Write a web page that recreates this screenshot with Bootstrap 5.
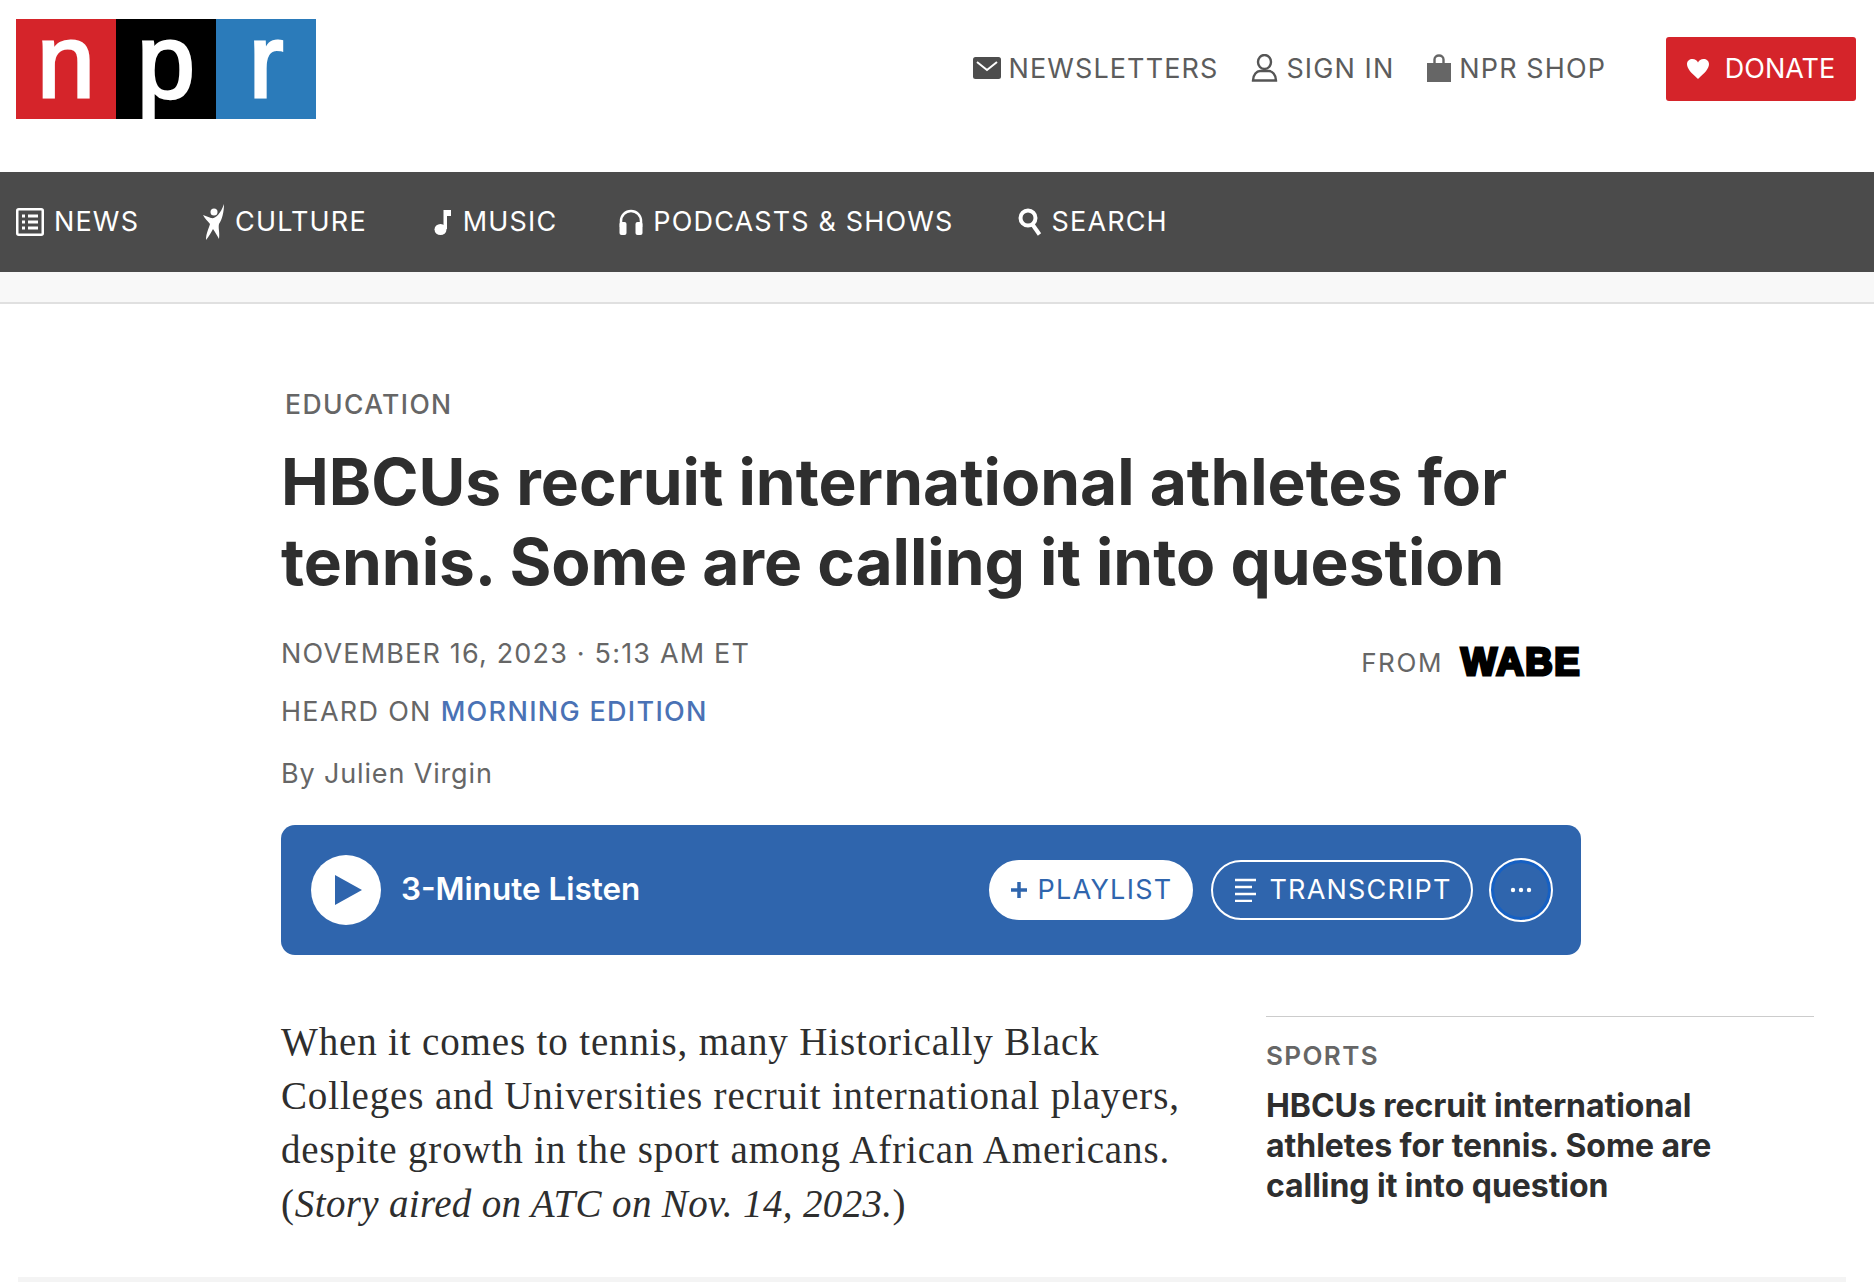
<!DOCTYPE html>
<html lang="en">
<head>
  <meta charset="UTF-8" />
  <title>NPR</title>
  <link href="https://cdn.jsdelivr.net/npm/bootstrap@5.3.0/dist/css/bootstrap.min.css" rel="stylesheet">
  <style>
    body { background: #fff; font-family: "Inter", "Liberation Sans", sans-serif; color: #2e2e2e; }
    a { text-decoration: none; }
    .top-bar { height: 172px; padding: 19px 18px 0 16px; }
    .logo-box { width: 100px; height: 100px; color: #fff; font-family: "Liberation Sans", sans-serif; font-weight: 400; font-size: 104px; line-height: 84px; -webkit-text-stroke: 3px #fff; }
    .logo-red { background: #d5242a; }
    .logo-black { background: #000; }
    .logo-blue { background: #2b7bba; }
    .top-links { height: 100px; }
    .top-group { padding-bottom: 2px; }
    .top-link { color: #5c5c5c; font-size: 27px; letter-spacing: 1.1px; line-height: 1; }
    .top-gap { margin-right: 33px; }
    .donate-btn { background: #d5242a; color: #fff; font-size: 27px; width: 190px; height: 64px; border-radius: 3px; margin-left: 60px; }
    .main-nav { background: #4b4b4b; height: 100px; padding-left: 16px; gap: 64px; }
    .main-link { color: #fff; font-size: 27px; letter-spacing: 1.15px; gap: 10px; }
    .music-link { margin-left: 3px; margin-right: -2px; gap: 11px; }
    .nav-strip { height: 32px; background: #f8f8f8; border-bottom: 2px solid #e0e0e0; }
    .story-wrap { padding-left: 281px; }
    .slug-line { color: #666; font-size: 26.5px; letter-spacing: 1.4px; padding: 0 0 0 4px; margin-top: 85px; font-weight: 500; line-height: 30px; }
    .story-title { font-size: 64px; font-weight: 700; line-height: 80px; margin: 23px 0 0; width: 1300px; }
    .meta-block { width: 1300px; margin-top: 36px; }
    .meta-line { color: #666; font-size: 27px; letter-spacing: 1.18px; line-height: 32px; }
    .meta-heard { margin-top: 26px; letter-spacing: 1.3px; }
    .meta-line a { color: #4a72b5; font-weight: 500; }
    .byline-text { color: #666; font-size: 27px; letter-spacing: .85px; line-height: 32px; margin-top: 30px; }
    .from-block { padding-top: 2px; gap: 18px; }
    .from-text { color: #666; font-size: 26px; letter-spacing: 1.6px; }
    .wabe-text { color: #000; font-size: 38px; font-weight: 900; letter-spacing: 1.5px; -webkit-text-stroke: 3px #000; font-family: "Liberation Sans", sans-serif; line-height: 44px; }
    .player-bar { background: #2f65ad; height: 130px; width: 1300px; border-radius: 14px; margin-top: 35px; padding: 0 28px 0 30px; color: #fff; }
    .play-disc { width: 70px; height: 70px; border-radius: 50%; background: #fff; }
    .listen-text { font-size: 31.4px; font-weight: 600; margin-left: 20px; }
    .pill-btn { height: 60px; border-radius: 30px; font-size: 27px; border: 2px solid #fff; }
    .pill-white { background: #fff; color: #2f65ad; width: 204px; letter-spacing: 1.3px; margin-right: 2px; }
    .pill-line { background: transparent; color: #fff; width: 262px; letter-spacing: 1.2px; gap: 13px; padding-left: 3px; }
    .more-btn { width: 64px; height: 64px; border-radius: 50%; border: 2px solid #fff; box-shadow: inset 0 0 0 3px #1560c4; }
    .story-body { margin-top: 60px; }
    .story-text { font-family: "Liberation Serif", serif; font-size: 39px; letter-spacing: .85px; line-height: 54px; width: 950px; flex-shrink: 0; color: #2e2e2e; }
    .story-text em { letter-spacing: .35px; }
    .side-box { width: 548px; margin-left: 35px; border-top: 1px solid #ccc; margin-top: 1px; padding-top: 24px; }
    .side-slug { color: #666; font-size: 26px; font-weight: 600; letter-spacing: 1.4px; line-height: 30px; }
    .side-title { font-size: 32px; font-weight: 700; line-height: 40px; margin-top: 15px; letter-spacing: -0.05px; }
    .foot-rule { height: 6px; background: #f4f4f4; margin: 46px 28px 0 18px; }
  </style>
</head>
<body>
  <header class="top-bar d-flex justify-content-between">
    <div class="d-flex">
      <div class="logo-box logo-red d-flex justify-content-center">n</div>
      <div class="logo-box logo-black d-flex justify-content-center">p</div>
      <div class="logo-box logo-blue d-flex justify-content-center">r</div>
    </div>
    <div class="top-links d-flex align-items-center">
      <div class="top-group d-flex align-items-center">
        <a class="top-link top-gap d-flex align-items-center gap-2" href="#">
          <svg width="28" height="22" viewBox="0 0 28 22"><rect width="28" height="22" rx="2.500" fill="#4d4d4d"/><path d="M4 5l10 8 10-8" fill="none" stroke="#fff" stroke-width="2"/></svg>NEWSLETTERS</a>
        <a class="top-link top-gap d-flex align-items-center gap-2" href="#">
          <svg width="27" height="28" viewBox="0 0 27 28"><ellipse cx="13.500" cy="8" rx="6.500" ry="7" fill="none" stroke="#555" stroke-width="2.400"/><path d="M2 26.500c0-6 4-9.500 7-9.500h9c3 0 7 3.500 7 9.500z" fill="none" stroke="#555" stroke-width="2.400"/></svg>SIGN IN</a>
        <a class="top-link d-flex align-items-center gap-2" href="#">
          <svg width="24" height="28" viewBox="0 0 24 28"><path d="M0 9h24v19H0z" fill="#666"/><path d="M7.500 10V5.500a4.500 4 0 0 1 9 0V10" fill="none" stroke="#666" stroke-width="2.400"/></svg>NPR SHOP</a>
      </div>
      <a class="donate-btn d-flex align-items-center justify-content-center gap-3" href="#">
        <svg width="22" height="22" viewBox="0 0 22 22"><path d="M11 21C4.500 15 0 11 0 6 0 3 2.500 1 5.500 1 8 1 10 2.500 11 4.500 12 2.500 14 1 16.500 1 19.500 1 22 3 22 6 22 11 17.500 15 11 21z" fill="#fff"/></svg>DONATE</a>
    </div>
  </header>

  <nav class="main-nav d-flex align-items-center">
    <a class="main-link d-flex align-items-center" href="#">
      <svg width="28" height="28" viewBox="0 0 28 28"><rect x="1.250" y="1.250" width="25.500" height="25.500" rx="1.500" fill="none" stroke="#fff" stroke-width="2.500"/><path d="M6 8h3M12 8h10M6 14h3M12 14h10M6 20h3M12 20h10" stroke="#fff" stroke-width="2.800"/></svg>NEWS</a>
    <a class="main-link d-flex align-items-center" href="#">
      <svg width="22" height="36" viewBox="0 0 22 36"><circle cx="11" cy="8" r="3.500" fill="#fff"/><path d="M0 11L8 14C12 15 17 11 21 0 21 8 19 16 16 20 15 24 17 28 16 35 14 31 12 28 10 25 8 29 6 32 3 36 3 29 6 24 7 20 5 17 2 15 0 11z" fill="#fff"/></svg>CULTURE</a>
    <a class="main-link music-link d-flex align-items-center" href="#">
      <svg width="18" height="26" viewBox="0 0 18 26"><ellipse cx="6.500" cy="20.500" rx="6" ry="5.500" fill="#fff"/><path d="M9.500 20V1H17v6h-4v13z" fill="#fff"/></svg>MUSIC</a>
    <a class="main-link d-flex align-items-center" href="#">
      <svg width="24" height="26" viewBox="0 0 24 26"><path d="M2 18v-6a10 10 0 0 1 20 0v6" fill="none" stroke="#fff" stroke-width="2.500"/><rect x="0.500" y="13" width="7" height="13" rx="2" fill="#fff"/><rect x="16.500" y="13" width="7" height="13" rx="2" fill="#fff"/></svg>PODCASTS &amp; SHOWS</a>
    <a class="main-link d-flex align-items-center" href="#">
      <svg width="24" height="28" viewBox="0 0 24 28"><circle cx="10" cy="10" r="7.500" fill="none" stroke="#fff" stroke-width="4"/><path d="M14.500 16.500l7 10" stroke="#fff" stroke-width="4"/></svg>SEARCH</a>
  </nav>
  <div class="nav-strip"></div>

  <main class="story-wrap">
    <div class="slug-line">EDUCATION</div>
    <h1 class="story-title">HBCUs recruit international athletes for tennis. Some are calling it into question</h1>

    <div class="meta-block d-flex justify-content-between">
      <div>
        <div class="meta-line">NOVEMBER 16, 2023 · 5:13 AM ET</div>
        <div class="meta-line meta-heard">HEARD ON <a href="#">MORNING EDITION</a></div>
        <div class="byline-text">By Julien Virgin</div>
      </div>
      <div class="from-block d-flex align-items-center align-self-start">
        <span class="from-text">FROM</span><span class="wabe-text">WABE</span>
      </div>
    </div>

    <section class="player-bar d-flex align-items-center">
      <div class="play-disc d-flex align-items-center justify-content-center">
        <svg width="32" height="30" viewBox="0 0 32 30"><path d="M5 0l27 15L5 30z" fill="#2f65ad"/></svg>
      </div>
      <div class="listen-text flex-grow-1">3-Minute Listen</div>
      <div class="d-flex align-items-center gap-3">
        <a class="pill-btn pill-white d-flex align-items-center justify-content-center gap-2" href="#">
          <svg width="20" height="20" viewBox="0 0 20 20"><path d="M10 2v16M2 10h16" stroke="#2f65ad" stroke-width="3.500"/></svg>PLAYLIST</a>
        <a class="pill-btn pill-line d-flex align-items-center justify-content-center" href="#">
          <svg width="21" height="24" viewBox="0 0 21 24"><path d="M0 2h21M0 9h17M0 16h21M0 23h17" stroke="#fff" stroke-width="2.500"/></svg>TRANSCRIPT</a>
        <a class="more-btn d-flex align-items-center justify-content-center" href="#">
          <svg width="22" height="6" viewBox="0 0 22 6"><circle cx="3" cy="3" r="2.200" fill="#fff"/><circle cx="11" cy="3" r="2.200" fill="#fff"/><circle cx="19" cy="3" r="2.200" fill="#fff"/></svg>
        </a>
      </div>
    </section>

    <div class="story-body d-flex">
      <div class="story-text">When it comes to tennis, many Historically Black Colleges and Universities recruit international players, despite growth in the sport among African Americans. (<em>Story aired on ATC on Nov. 14, 2023.</em>)</div>
      <aside class="side-box">
        <div class="side-slug">SPORTS</div>
        <div class="side-title">HBCUs recruit international athletes for tennis. Some are calling it into question</div>
      </aside>
    </div>
  </main>
  <div class="foot-rule"></div>
</body>
</html>
